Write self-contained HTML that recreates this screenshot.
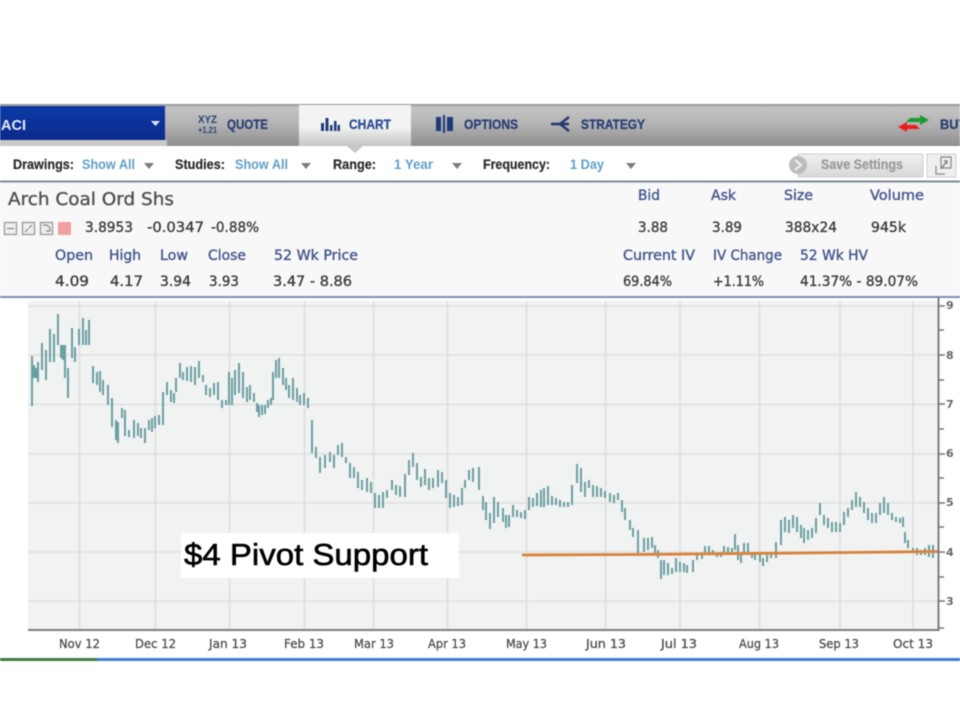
<!DOCTYPE html>
<html><head><meta charset="utf-8"><title>Arch Coal chart</title>
<style>
html,body{margin:0;padding:0;background:#fff;width:960px;height:720px;overflow:hidden}
svg{display:block;filter:blur(.6px)}
.t{font-family:"Liberation Sans",sans-serif;font-weight:bold;font-size:14px;fill:#2c4075;stroke:#2c4075;stroke-width:.3px}
.b{font-family:"Liberation Sans",sans-serif;font-weight:bold;font-size:14px;fill:#2a2a2a;stroke:#2a2a2a;stroke-width:.2px}
.l{font-family:"Liberation Sans",sans-serif;font-weight:bold;font-size:14px;fill:#5f9fc6}
.h{font-family:"DejaVu Sans",sans-serif;font-size:14px;fill:#42558c;stroke:#42558c;stroke-width:.35px}
.v{font-family:"DejaVu Sans",sans-serif;font-size:14px;fill:#3c3c3c;stroke:#3c3c3c;stroke-width:.35px}
.x{font-family:"DejaVu Sans",sans-serif;font-size:12px;fill:#4a4a4a;stroke:#4a4a4a;stroke-width:.25px}
.y{font-family:"DejaVu Sans",sans-serif;font-weight:bold;font-size:11px;fill:#666}
</style></head><body>
<svg width="960" height="720" viewBox="0 0 960 720" xmlns="http://www.w3.org/2000/svg">
<defs>
<linearGradient id="bar" x1="0" y1="0" x2="0" y2="1"><stop offset="0" stop-color="#8f8f8f"/><stop offset=".08" stop-color="#c4c4c4"/><stop offset=".5" stop-color="#b2b2b2"/><stop offset="1" stop-color="#8e8e8e"/></linearGradient>
<linearGradient id="tab" x1="0" y1="0" x2="0" y2="1"><stop offset="0" stop-color="#f4f4f4"/><stop offset=".55" stop-color="#f2f2f2"/><stop offset="1" stop-color="#c4c4c4"/></linearGradient>
<linearGradient id="blue" x1="0" y1="0" x2="0" y2="1"><stop offset="0" stop-color="#0d3aa6"/><stop offset="1" stop-color="#0a2a8c"/></linearGradient>
<linearGradient id="btn" x1="0" y1="0" x2="0" y2="1"><stop offset="0" stop-color="#f0f0f0"/><stop offset="1" stop-color="#d8d8d8"/></linearGradient>
</defs>
<rect width="960" height="720" fill="#fff"/>

<!-- nav bar -->
<rect x="0" y="104" width="960" height="42" fill="url(#bar)"/>
<rect x="0" y="106" width="165" height="34" fill="url(#blue)"/>
<rect x="0" y="140" width="167" height="6" fill="#c9c9c9"/>
<text x="1" y="130" textLength="25" lengthAdjust="spacingAndGlyphs" style="font:bold 15px 'Liberation Sans',sans-serif;fill:#e8ecf6">ACI</text>
<path d="M151 121h9l-4.500 5z" fill="#dfe6f5"/>
<rect x="299" y="105" width="112" height="41" fill="url(#tab)"/>
<path d="M347 146h16l-8 7z" fill="#c6c6c6"/>
<text x="198" y="123" textLength="19" lengthAdjust="spacingAndGlyphs" style="font:bold 11px 'Liberation Sans',sans-serif;fill:#2c4075">XYZ</text>
<text x="198" y="133" textLength="19" lengthAdjust="spacingAndGlyphs" style="font:bold 9px 'Liberation Sans',sans-serif;fill:#2c4075">+1.21</text>
<text class="t" x="227" y="129" textLength="41" lengthAdjust="spacingAndGlyphs">QUOTE</text>
<path d="M321 123h3v8h-3zM325.500 118h3v13h-3zM330 125h2.500v6H330zM334 121h2.500v10H334zM337.500 125h2.500v6h-2.500z" fill="#1f3a78"/>
<text class="t" x="349" y="129" textLength="42" lengthAdjust="spacingAndGlyphs" style="fill:#2e4f94;stroke:#2e4f94">CHART</text>
<path d="M436 117h5v14h-5zM443 115h2v18h-2zM447 117h6v14h-6z" fill="#1f3a78"/>
<text class="t" x="464" y="129" textLength="54" lengthAdjust="spacingAndGlyphs">OPTIONS</text>
<path d="M551 124h9l9-7M560 124h9M560 124l9 7" fill="none" stroke="#22396f" stroke-width="2.400"/>
<text class="t" x="581" y="129" textLength="64" lengthAdjust="spacingAndGlyphs">STRATEGY</text>
<path d="M910 118h10v-3l9 5-9 5v-3h-14z" fill="#1c9a2c"/>
<path d="M916 125h-9v-3l-9 5 9 5v-3h13z" fill="#ee1c1c"/>
<text class="t" x="940" y="129" textLength="27" lengthAdjust="spacingAndGlyphs">BUY</text>

<!-- toolbar -->
<text class="b" x="13" y="169" textLength="61" lengthAdjust="spacingAndGlyphs">Drawings:</text>
<text class="l" x="82" y="169" textLength="53" lengthAdjust="spacingAndGlyphs">Show All</text>
<path d="M144 163h10l-5 6z" fill="#7d7d7d"/>
<text class="b" x="175" y="169" textLength="50" lengthAdjust="spacingAndGlyphs">Studies:</text>
<text class="l" x="235" y="169" textLength="53" lengthAdjust="spacingAndGlyphs">Show All</text>
<path d="M301 163h10l-5 6z" fill="#7d7d7d"/>
<text class="b" x="333" y="169" textLength="43" lengthAdjust="spacingAndGlyphs">Range:</text>
<text class="l" x="394" y="169" textLength="39" lengthAdjust="spacingAndGlyphs">1 Year</text>
<path d="M452 163h10l-5 6z" fill="#7d7d7d"/>
<text class="b" x="483" y="169" textLength="67" lengthAdjust="spacingAndGlyphs">Frequency:</text>
<text class="l" x="570" y="169" textLength="34" lengthAdjust="spacingAndGlyphs">1 Day</text>
<path d="M626 163h10l-5 6z" fill="#7d7d7d"/>

<rect x="798" y="154" width="125" height="23" rx="1" fill="url(#btn)" stroke="#cfcfcf"/>
<circle cx="798" cy="165" r="9" fill="#bdbdbd"/>
<path d="M795 160l6 5-6 5" fill="none" stroke="#f2f2f2" stroke-width="2"/>
<text class="b" x="821" y="169" textLength="82" lengthAdjust="spacingAndGlyphs" style="fill:#999;stroke:#999">Save Settings</text>
<rect x="927" y="154" width="29" height="23" fill="#efefef" stroke="#d0d0d0"/>
<path d="M941 157h10v11h-10zM936 166v8h9" fill="none" stroke="#888" stroke-width="1.200"/>
<path d="M941 169l6-8M944 161h3v3" fill="none" stroke="#777" stroke-width="1.200"/>

<!-- info panel -->
<rect x="0" y="182" width="960" height="115" fill="#f8f8f8"/>
<rect x="0" y="180.500" width="960" height="2" fill="#7f8a99"/>
<rect x="0" y="296" width="960" height="2" fill="#7f8db2"/>
<text x="8" y="205" textLength="166" lengthAdjust="spacingAndGlyphs" style="font:18px 'DejaVu Sans',sans-serif;fill:#505050;stroke:#505050;stroke-width:.35px">Arch Coal Ord Shs</text>
<g fill="#eee" stroke="#999" stroke-width="1.300"><rect x="4.500" y="222.500" width="12" height="12"/><rect x="22.500" y="222.500" width="12" height="12"/><rect x="40.500" y="222.500" width="12" height="12"/></g>
<path d="M7 228.500h7M25 232l3-3M29 228l3-3M43 225h4l3 3v3h-4" stroke="#888" fill="none" stroke-width="1.200"/>
<rect x="58" y="222" width="13" height="13" rx="1" fill="#f0a0a0"/>

<text class="v" x="85" y="232" textLength="48" lengthAdjust="spacingAndGlyphs">3.8953</text>
<text class="v" x="147" y="232" textLength="57" lengthAdjust="spacingAndGlyphs">-0.0347</text>
<text class="v" x="211" y="232" textLength="48" lengthAdjust="spacingAndGlyphs">-0.88%</text>

<text class="h" x="55" y="260" textLength="38" lengthAdjust="spacingAndGlyphs">Open</text>
<text class="h" x="109" y="260" textLength="32" lengthAdjust="spacingAndGlyphs">High</text>
<text class="h" x="160" y="260" textLength="28" lengthAdjust="spacingAndGlyphs">Low</text>
<text class="h" x="208" y="260" textLength="38" lengthAdjust="spacingAndGlyphs">Close</text>
<text class="h" x="274" y="260" textLength="84" lengthAdjust="spacingAndGlyphs">52 Wk Price</text>
<text class="v" x="55" y="286" textLength="34" lengthAdjust="spacingAndGlyphs">4.09</text>
<text class="v" x="110" y="286" textLength="33" lengthAdjust="spacingAndGlyphs">4.17</text>
<text class="v" x="160" y="286" textLength="31" lengthAdjust="spacingAndGlyphs">3.94</text>
<text class="v" x="209" y="286" textLength="30" lengthAdjust="spacingAndGlyphs">3.93</text>
<text class="v" x="273" y="286" textLength="79" lengthAdjust="spacingAndGlyphs">3.47 - 8.86</text>

<text class="h" x="638" y="200" textLength="22" lengthAdjust="spacingAndGlyphs">Bid</text>
<text class="h" x="711" y="200" textLength="25" lengthAdjust="spacingAndGlyphs">Ask</text>
<text class="h" x="784" y="200" textLength="29" lengthAdjust="spacingAndGlyphs">Size</text>
<text class="h" x="870" y="200" textLength="54" lengthAdjust="spacingAndGlyphs">Volume</text>
<text class="v" x="638" y="232" textLength="30" lengthAdjust="spacingAndGlyphs">3.88</text>
<text class="v" x="712" y="232" textLength="30" lengthAdjust="spacingAndGlyphs">3.89</text>
<text class="v" x="785" y="232" textLength="52" lengthAdjust="spacingAndGlyphs">388x24</text>
<text class="v" x="871" y="232" textLength="35" lengthAdjust="spacingAndGlyphs">945k</text>
<text class="h" x="623" y="260" textLength="72" lengthAdjust="spacingAndGlyphs">Current IV</text>
<text class="h" x="713" y="260" textLength="69" lengthAdjust="spacingAndGlyphs">IV Change</text>
<text class="h" x="800" y="260" textLength="68" lengthAdjust="spacingAndGlyphs">52 Wk HV</text>
<text class="v" x="623" y="286" textLength="49" lengthAdjust="spacingAndGlyphs">69.84%</text>
<text class="v" x="713" y="286" textLength="51" lengthAdjust="spacingAndGlyphs">+1.11%</text>
<text class="v" x="800" y="286" textLength="118" lengthAdjust="spacingAndGlyphs">41.37% - 89.07%</text>

<!-- chart -->
<rect x="28" y="301" width="910" height="329" fill="#f1f2f2"/>
<path d="M28 306H938M28 355H938M28 404.500H938M28 454H938M28 503H938M28 552H938M28 601H938" stroke="#dfe0df" stroke-width="1.500" fill="none"/>
<path d="M79.500 301V630M155.500 301V630M229.500 301V630M304.500 301V630M373.500 301V630M447.500 301V630M526.500 301V630M605.500 301V630M680 301V630M759.500 301V630M840 301V630M913 301V630" stroke="#dcdddc" stroke-width="1.500" fill="none"/>

<path fill="none" stroke="#6a9ea1" stroke-width="2" d="
M32 356V406M34 365V378M36 368V378M38 362V382M42 343V370M46 350V380M50 329V362M54 334V362M58 314V345M61 345V358M63 345V360M65 345V378M68 368V398M72 328V358M75 347V362M79 329V345M83 318V345M86 330V345M89 320V345
M93 366V383M97 372V385M100 371V392M103 380V395M108 385V405M112 398V427M116 420V440M118 422V443M122 408V418M125 410V436M129 430V437M134 420V438M138 423V436M141 428V438M145 428V443M149 420V430M152 418V432M155 416V428M159 415V425M163 392V425M167 382V395M171 390V402M174 393V403M176 378V392M180 363V378M183 372V380M187 367V381M191 366V382M195 367V385M199 361V378M203 375V382M206 385V395M210 388V397M214 383V395M218 382V400M222 400V408M226 400V405M229 372V405M232 378V405M235 370V395M239 363V393M243 372V398M247 387V402M250 385V400M254 393V402M257 403V412M259 405V417M262 405V415M265 405V414M268 400V408M271 398V405M273 372V400M276 360V378M279 358V378M283 368V385M286 378V390M289 385V398M293 378V400M297 388V402M300 395V405M304 393V405M308 398V408
M312 420V453M316 447V458M320 457V473M325 455V468M330 452V462M334 455V468M338 445V455M342 443V457M346 457V463M350 463V478M354 467V478M358 472V488M362 480V490M367 478V492M371 482V493M375 493V508M379 495V508M383 492V508M387 490V498M392 480V490M396 485V495M400 486V497M405 474V497M409 460V475M413 453V467M417 463V480M421 477V487M425 469V485M429 478V490M433 478V488M438 470V487M442 472V483M446 480V498M450 493V508M454 495V507M458 497V506M462 488V505M465 480V488M469 470V480M473 468V482M479 467V490
M483 496V510M486 502V520M490 513V529M494 497V523M498 502V517M503 508V522M506 515V528M509 515V527M513 505V517M517 510V517M521 512V518M525 510V519M529 497V510M533 498V507M537 493V506M541 490V507M544 488V507M548 486V505M552 496V505M556 498V505M560 500V507M564 502V507M568 502V507M572 485V505M577 464V483M581 468V492M585 482V497M589 480V488M593 485V497M597 486V497M601 488V497M605 491V498M610 493V502M614 495V503M618 493V500M622 500V512M625 508V520M630 520V530M633 528V537M638 530V553M644 538V552M648 538V550M652 537V548M655 545V555M658 550V558
M661 560V579M664 560V575M668 563V575M672 568V574M676 558V572M680 562V572M684 563V572M687 565V573M693 560V572M697 555V560M702 553V559M705 546V553M709 546V553M713 550V555M717 553V557M721 552V557M724 546V555M728 547V553M732 548V553M735 534V550M738 545V560M741 553V563M744 543V553M748 543V555M752 552V558M755 552V560M760 553V562M763 558V566M767 555V562M771 553V558M776 542V558M781 520V545M785 517V532M789 520V533M793 515V528M797 517V532M801 525V538M804 528V543M808 530V540M812 528V538M816 518V533M820 503V515M824 515V525M828 518V528M832 522V532M836 522V532M840 523V532M844 512V525M848 508V517M852 500V510M856 492V507M860 497V507M864 502V513M868 508V520M872 513V523M876 513V523M880 503V515M884 497V513M888 503V515M892 513V520M896 517V522M900 518V523M903 517V527M905 532V543M908 540V548M913 548V553M917 548V555M921 550V555M925 548V555M929 545V557M933 545V558"/>

<rect x="181" y="533" width="278" height="45" fill="#fff"/>
<text x="184" y="565" textLength="244" lengthAdjust="spacingAndGlyphs" style="font:31px 'Liberation Sans',sans-serif;fill:#000;stroke:#000;stroke-width:.6px">$4 Pivot Support</text>
<path d="M522 555L640 554.500L800 553L938 551.500" stroke="#d9823a" stroke-width="2.800" fill="none"/>

<!-- axes -->
<rect x="28" y="629" width="911" height="2" fill="#7d7d7d"/>
<rect x="937.500" y="298" width="2" height="333" fill="#7d7d7d"/>
<path d="M939 306h6M939 330h5M939 355h6M939 380h5M939 404h6M939 429h5M939 454h6M939 478h5M939 503h6M939 527h5M939 552h6M939 577h5M939 601h6M939 628h5" stroke="#777" stroke-width="1.500"/>
<text class="y" x="946" y="309">9</text><text class="y" x="946" y="359">8</text><text class="y" x="946" y="408">7</text><text class="y" x="946" y="457">6</text><text class="y" x="946" y="506">5</text><text class="y" x="946" y="556">4</text><text class="y" x="946" y="605">3</text>
<text class="x" x="59" y="648" textLength="41" lengthAdjust="spacingAndGlyphs">Nov 12</text>
<text class="x" x="135" y="648" textLength="41" lengthAdjust="spacingAndGlyphs">Dec 12</text>
<text class="x" x="209" y="648" textLength="38" lengthAdjust="spacingAndGlyphs">Jan 13</text>
<text class="x" x="284" y="648" textLength="40" lengthAdjust="spacingAndGlyphs">Feb 13</text>
<text class="x" x="354" y="648" textLength="40" lengthAdjust="spacingAndGlyphs">Mar 13</text>
<text class="x" x="428" y="648" textLength="38" lengthAdjust="spacingAndGlyphs">Apr 13</text>
<text class="x" x="506" y="648" textLength="41" lengthAdjust="spacingAndGlyphs">May 13</text>
<text class="x" x="586" y="648" textLength="40" lengthAdjust="spacingAndGlyphs">Jun 13</text>
<text class="x" x="661" y="648" textLength="36" lengthAdjust="spacingAndGlyphs">Jul 13</text>
<text class="x" x="739" y="648" textLength="40" lengthAdjust="spacingAndGlyphs">Aug 13</text>
<text class="x" x="819" y="648" textLength="40" lengthAdjust="spacingAndGlyphs">Sep 13</text>
<text class="x" x="893" y="648" textLength="40" lengthAdjust="spacingAndGlyphs">Oct 13</text>

<rect x="0" y="658" width="97" height="3" fill="#3f7d45"/>
<rect x="97" y="658" width="863" height="3" fill="#3f7dd2"/>
</svg>
</body></html>
